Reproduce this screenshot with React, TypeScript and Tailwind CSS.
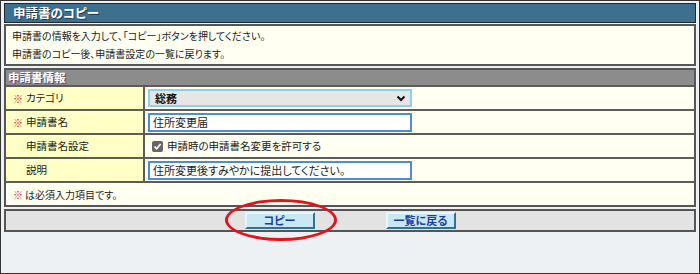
import React from "react";

const font = "font-['Noto_Sans_CJK_JP','Noto_Sans',sans-serif] [font-feature-settings:'palt']";

function Label({ req, children }: { req?: boolean; children: React.ReactNode }) {
  return (
    <div className="w-[137px] shrink-0 bg-[#ffffc6] flex items-center pl-[7px] text-[10.5px] text-[#222]">
      <span className="w-[13px] text-[#e0201c] text-[10px] font-bold">{req ? "※" : ""}</span>
      <span>{children}</span>
    </div>
  );
}

function Row({ children }: { children: React.ReactNode }) {
  return <div className="flex h-[24px] border-t-2 border-[#5c5c5c]">{children}</div>;
}

function Value({ children }: { children: React.ReactNode }) {
  return (
    <div className="flex-1 flex items-center bg-[#fffff2] border-l-2 border-[#5c5c5c] pl-[3px]">{children}</div>
  );
}

function Btn({ children }: { children: React.ReactNode }) {
  return (
    <div className="w-[70px] h-[17px] flex items-center justify-center bg-[#c9e8f3] border-2 border-t-[#e8f6fb] border-l-[#e8f6fb] border-r-[#2f7390] border-b-[#2f7390] text-[11px] font-bold text-[#1d3d9e] leading-none">
      {children}
    </div>
  );
}

export default function App() {
  return (
    <div className={`${font} relative w-[700px] h-[274px] border border-[#333] bg-[#edf1f4] px-[3px] pt-[2px] overflow-hidden`}>
      {/* title */}
      <div className="h-[20px] bg-[#3d6f8f] border border-[#1d2a33] flex items-center pl-[8px] text-white font-bold text-[12.5px] [text-shadow:1px_1px_0_#1f3a4c]">
        申請書のコピー
      </div>
      {/* instructions */}
      <div className="mt-[1px] h-[42px] bg-[#fffff2] border-2 border-[#555] pl-[6px] pt-[1px] text-[10px] leading-[18px] text-[#222]">
        <div>申請書の情報を入力して、「コピー」ボタンを押してください。</div>
        <div>申請書のコピー後、申請書設定の一覧に戻ります。</div>
      </div>
      {/* form */}
      <div className="mt-[2px] border-2 border-[#555]">
        <div className="h-[15px] bg-[#8c8c8c] flex items-center pl-[2px] text-white font-bold text-[11.5px] [text-shadow:1px_1px_0_#5a4a6a]">
          申請書情報
        </div>
        <Row>
          <Label req>カテゴリ</Label>
          <Value>
            <div className="w-[264px] h-[18px] bg-[#e6e6e6] border-2 border-[#8fd0e6] flex items-center justify-between pl-[5px] pr-[4px]">
              <span className="text-[11px] font-bold text-[#111]">総務</span>
              <svg width="10" height="7" viewBox="0 0 10 7">
                <path d="M1.5 1.5 L5 5 L8.5 1.5" stroke="#111" strokeWidth="2" fill="none" />
              </svg>
            </div>
          </Value>
        </Row>
        <Row>
          <Label req>申請書名</Label>
          <Value>
            <div className="w-[264px] h-[19px] bg-white border-2 border-[#4a8fd6] flex items-center pl-[3px] text-[11px] text-[#222]">
              住所変更届
            </div>
          </Value>
        </Row>
        <Row>
          <Label>申請書名設定</Label>
          <Value>
            <div className="flex items-center pl-[4px] gap-[4px] text-[10.5px] text-[#222]">
              <div className="w-[11px] h-[11px] rounded-[2px] bg-[#666] flex items-center justify-center">
                <svg width="9" height="9" viewBox="0 0 9 9">
                  <path d="M1.5 4.5 L3.6 6.7 L7.6 2" stroke="#fff" strokeWidth="1.6" fill="none" />
                </svg>
              </div>
              <span>申請時の申請書名変更を許可する</span>
            </div>
          </Value>
        </Row>
        <Row>
          <Label>説明</Label>
          <Value>
            <div className="w-[264px] h-[19px] bg-white border-2 border-[#4a8fd6] flex items-center pl-[3px] text-[11px] text-[#222]">
              住所変更後すみやかに提出してください。
            </div>
          </Value>
        </Row>
        <div className="h-[24px] border-t-2 border-[#5c5c5c] bg-[#fffff2] flex items-center pl-[7px] text-[10px] text-[#222]">
          <span className="w-[12px] text-[#e0201c] font-bold">※</span>
          <span>は必須入力項目です。</span>
        </div>
      </div>
      {/* buttons */}
      <div className="mt-[2px] h-[23px] bg-[#e3e3e3] border-2 border-[#555] flex items-center justify-center gap-[71px]">
        <Btn>コピー</Btn>
        <Btn>一覧に戻る</Btn>
      </div>
      {/* red ellipse */}
      <div className="absolute left-[224px] top-[198px] w-[112px] h-[42px] rounded-[50%] border-[3px] border-[#e5141b]" />
    </div>
  );
}
